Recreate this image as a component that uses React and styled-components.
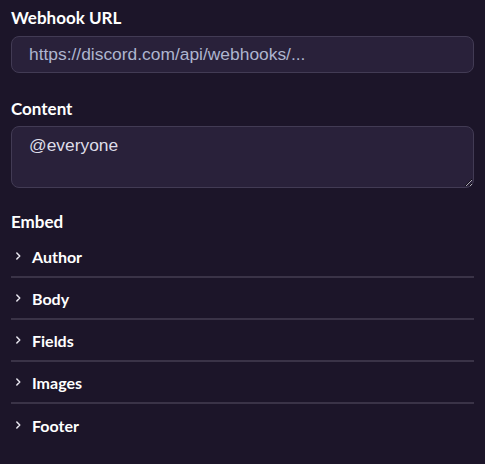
import React from "react";
import styled, { createGlobalStyle } from "styled-components";

const GlobalStyle = createGlobalStyle`
  html, body {
    margin: 0;
    padding: 0;
    background: #1c1529;
  }
  * {
    box-sizing: border-box;
  }
`;

const Page = styled.div`
  padding: 8px 11px 20px 11px;
  display: flex;
  flex-direction: column;
  font-family: "Lato", "Noto Sans", sans-serif;
  color: #ffffff;
`;

const Field = styled.div`
  display: flex;
  flex-direction: column;
  margin-top: ${(p) => p.$top || 0}px;
`;

const Label = styled.label`
  font-size: 17px;
  line-height: 20px;
  font-weight: 700;
  color: #ffffff;
  margin-bottom: ${(p) => p.$gap || 8}px;
`;

const TextInput = styled.input`
  width: 100%;
  height: 37px;
  background: #29213a;
  border: 1px solid #423b54;
  border-radius: 8px;
  color: #aeb5cf;
  font-family: "Liberation Sans", Arial, sans-serif;
  font-size: 17.4px;
  padding: 0 17px;
  outline: none;
`;

const TextArea = styled.textarea`
  display: block;
  width: 100%;
  height: 62px;
  background: #29213a;
  border: 1px solid #423b54;
  border-radius: 8px;
  color: #dedde8;
  font-family: "Liberation Sans", Arial, sans-serif;
  font-size: 17.4px;
  line-height: 22px;
  padding: 7px 17px;
  outline: none;
  resize: vertical;
`;

const Accordion = styled.div`
  display: flex;
  flex-direction: column;
`;

const Row = styled.div`
  display: flex;
  align-items: center;
  gap: 7px;
  height: 42px;
  border-bottom: ${(p) => (p.$last ? "none" : "2px solid #3a3347")};
  font-size: 16px;
  font-weight: 700;
  color: #ffffff;
  cursor: pointer;
`;

const Chevron = () => (
  <svg
    width="14"
    height="14"
    viewBox="0 0 24 24"
    fill="none"
    stroke="#e8e6ef"
    strokeWidth="2.6"
    strokeLinecap="round"
    strokeLinejoin="round"
  >
    <path d="m10 7 5 5-5 5" />
  </svg>
);

const sections = ["Author", "Body", "Fields", "Images", "Footer"];

export default function App() {
  return (
    <>
      <GlobalStyle />
      <Page>
        <Field>
          <Label>Webhook URL</Label>
          <TextInput defaultValue="https://discord.com/api/webhooks/..." />
        </Field>
        <Field $top={26}>
          <Label $gap={7}>Content</Label>
          <TextArea defaultValue="@everyone" />
        </Field>
        <Field $top={24}>
          <Label $gap={4}>Embed</Label>
          <Accordion>
            {sections.map((s, i) => (
              <Row key={s} $last={i === sections.length - 1}>
                <Chevron />
                {s}
              </Row>
            ))}
          </Accordion>
        </Field>
      </Page>
    </>
  );
}
